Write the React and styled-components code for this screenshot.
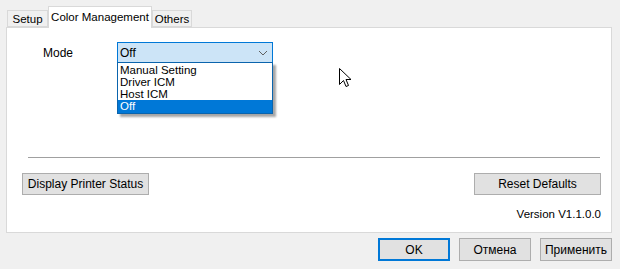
import React from 'react'
import styled, { createGlobalStyle } from 'styled-components';

const GlobalStyle = createGlobalStyle`
    html, body {
        margin: 0;
        padding: 0;
        background: #f0f0f0;
    }
    body {
        font-family: "Liberation Sans", Arial, sans-serif;
        font-size: 12px;
        color: #000;
    }
`;

const modes = ['Manual Setting', 'Driver ICM', 'Host ICM', 'Off'];

const App = () => {
    return (
        <Window>
            <GlobalStyle />
            <TabStrip>
                <Tab width={41}>Setup</Tab>
                <Tab active width={104}>Color Management</Tab>
                <Tab width={40}>Others</Tab>
            </TabStrip>

            <Panel>
                <ModeRow>
                    <Label>Mode</Label>
                    <ComboWrap>
                        <Combo>
                            <span>Off</span>
                            <svg width="10" height="6" viewBox="0 0 10 6">
                                <path d="M1 1 L5 5 L9 1" fill="none" stroke="#606060" strokeWidth="1" />
                            </svg>
                        </Combo>
                        <DropList>
                            {modes.map(m => (
                                <ListItem key={m} selected={m === 'Off'}>{m}</ListItem>
                            ))}
                        </DropList>
                    </ComboWrap>
                </ModeRow>

                <Separator />

                <ButtonRow>
                    <PanelButton>Display Printer Status</PanelButton>
                    <PanelButton>Reset Defaults</PanelButton>
                </ButtonRow>

                <Version>Version V1.1.0.0</Version>

                <Cursor width="13" height="20" viewBox="0 0 13 20">
                    <path d="M0.5 0.5 L0.5 16.5 L4.5 12.5 L7 18.5 L9.5 17.5 L7 11.5 L12 11.5 Z"
                        fill="#fff" stroke="#000" strokeWidth="1" strokeLinejoin="miter" />
                </Cursor>
            </Panel>

            <DialogButtons>
                <DialogButton primary>OK</DialogButton>
                <DialogButton>Отмена</DialogButton>
                <DialogButton>Применить</DialogButton>
            </DialogButtons>
        </Window>
    )
}

const Window = styled.div`
    width: 620px;
    height: 269px;
    box-sizing: border-box;
    padding-top: 6px;
    background: #f0f0f0;
`;

const TabStrip = styled.div`
    display: flex;
    align-items: flex-end;
    padding-left: 7px;
    height: 21px;
    position: relative;
    z-index: 1;
`;

const Tab = styled.div`
    box-sizing: border-box;
    width: ${p => p.width}px;
    height: ${p => p.active ? '22px' : '17px'};
    margin-bottom: ${p => p.active ? '-1px' : '0'};
    padding-top: ${p => p.active ? '3px' : '1px'};
    background: ${p => p.active ? '#fff' : '#f0f0f0'};
    border: 1px solid #d9d9d9;
    border-bottom: ${p => p.active ? 'none' : '1px solid #d9d9d9'};
    font-size: 11.5px;
    text-align: center;
    white-space: nowrap;
    line-height: 14px;
`;

const Panel = styled.div`
    position: relative;
    box-sizing: border-box;
    width: 606px;
    height: 206px;
    margin-left: 6px;
    background: #fff;
    border: 1px solid #d9d9d9;
    padding: 14px 10px 0 15px;
    display: flex;
    flex-direction: column;
`;

const ModeRow = styled.div`
    display: flex;
    align-items: center;
    padding-left: 21px;
`;

const Label = styled.div`
    width: 74px;
`;

const ComboWrap = styled.div`
    position: relative;
`;

const Combo = styled.div`
    box-sizing: border-box;
    width: 156px;
    height: 21px;
    border: 1px solid #0078d7;
    background: #cce4f7;
    display: flex;
    align-items: center;
    justify-content: space-between;
    padding: 0 4px 0 2px;
    line-height: 14px;
`;

const DropList = styled.div`
    position: absolute;
    top: 20px;
    left: 0;
    box-sizing: border-box;
    width: 156px;
    border: 1px solid #0a64ad;
    background: #fff;
    box-shadow: 3px 3px 2px rgba(0, 0, 0, 0.35);
    padding-top: 1px;
    z-index: 2;
`;

const ListItem = styled.div`
    height: 12px;
    line-height: 12px;
    font-size: 11.5px;
    padding: 0 2px;
    background: ${p => p.selected ? '#0078d7' : 'transparent'};
    color: ${p => p.selected ? '#fff' : '#000'};
    &:last-child {
        height: 13px;
        line-height: 13px;
    }
`;

const Separator = styled.div`
    height: 1px;
    background: #a0a0a0;
    margin: 94px 0 0 6px;
    width: 572px;
`;

const ButtonRow = styled.div`
    display: flex;
    justify-content: space-between;
    margin-top: 15px;
`;

const PanelButton = styled.button`
    box-sizing: border-box;
    width: 127px;
    height: 22px;
    border: 1px solid #adadad;
    background: #e1e1e1;
    font-family: "Liberation Sans", Arial, sans-serif;
    font-size: 12px;
    color: #000;
    padding: 0;
`;

const Version = styled.div`
    text-align: right;
    margin-top: 12px;
    line-height: 14px;
    font-size: 11.5px;
`;

const Cursor = styled.svg`
    position: absolute;
    left: 332px;
    top: 40px;
`;

const DialogButtons = styled.div`
    display: flex;
    justify-content: flex-end;
    gap: 9px;
    padding: 5px 8px 0 0;
`;

const DialogButton = styled.button`
    box-sizing: border-box;
    width: 72px;
    height: 23px;
    border: ${p => p.primary ? '2px solid #0078d7' : '1px solid #adadad'};
    background: #e1e1e1;
    font-family: "Liberation Sans", Arial, sans-serif;
    font-size: 12px;
    color: #000;
    padding: 0;
`;

export default App
